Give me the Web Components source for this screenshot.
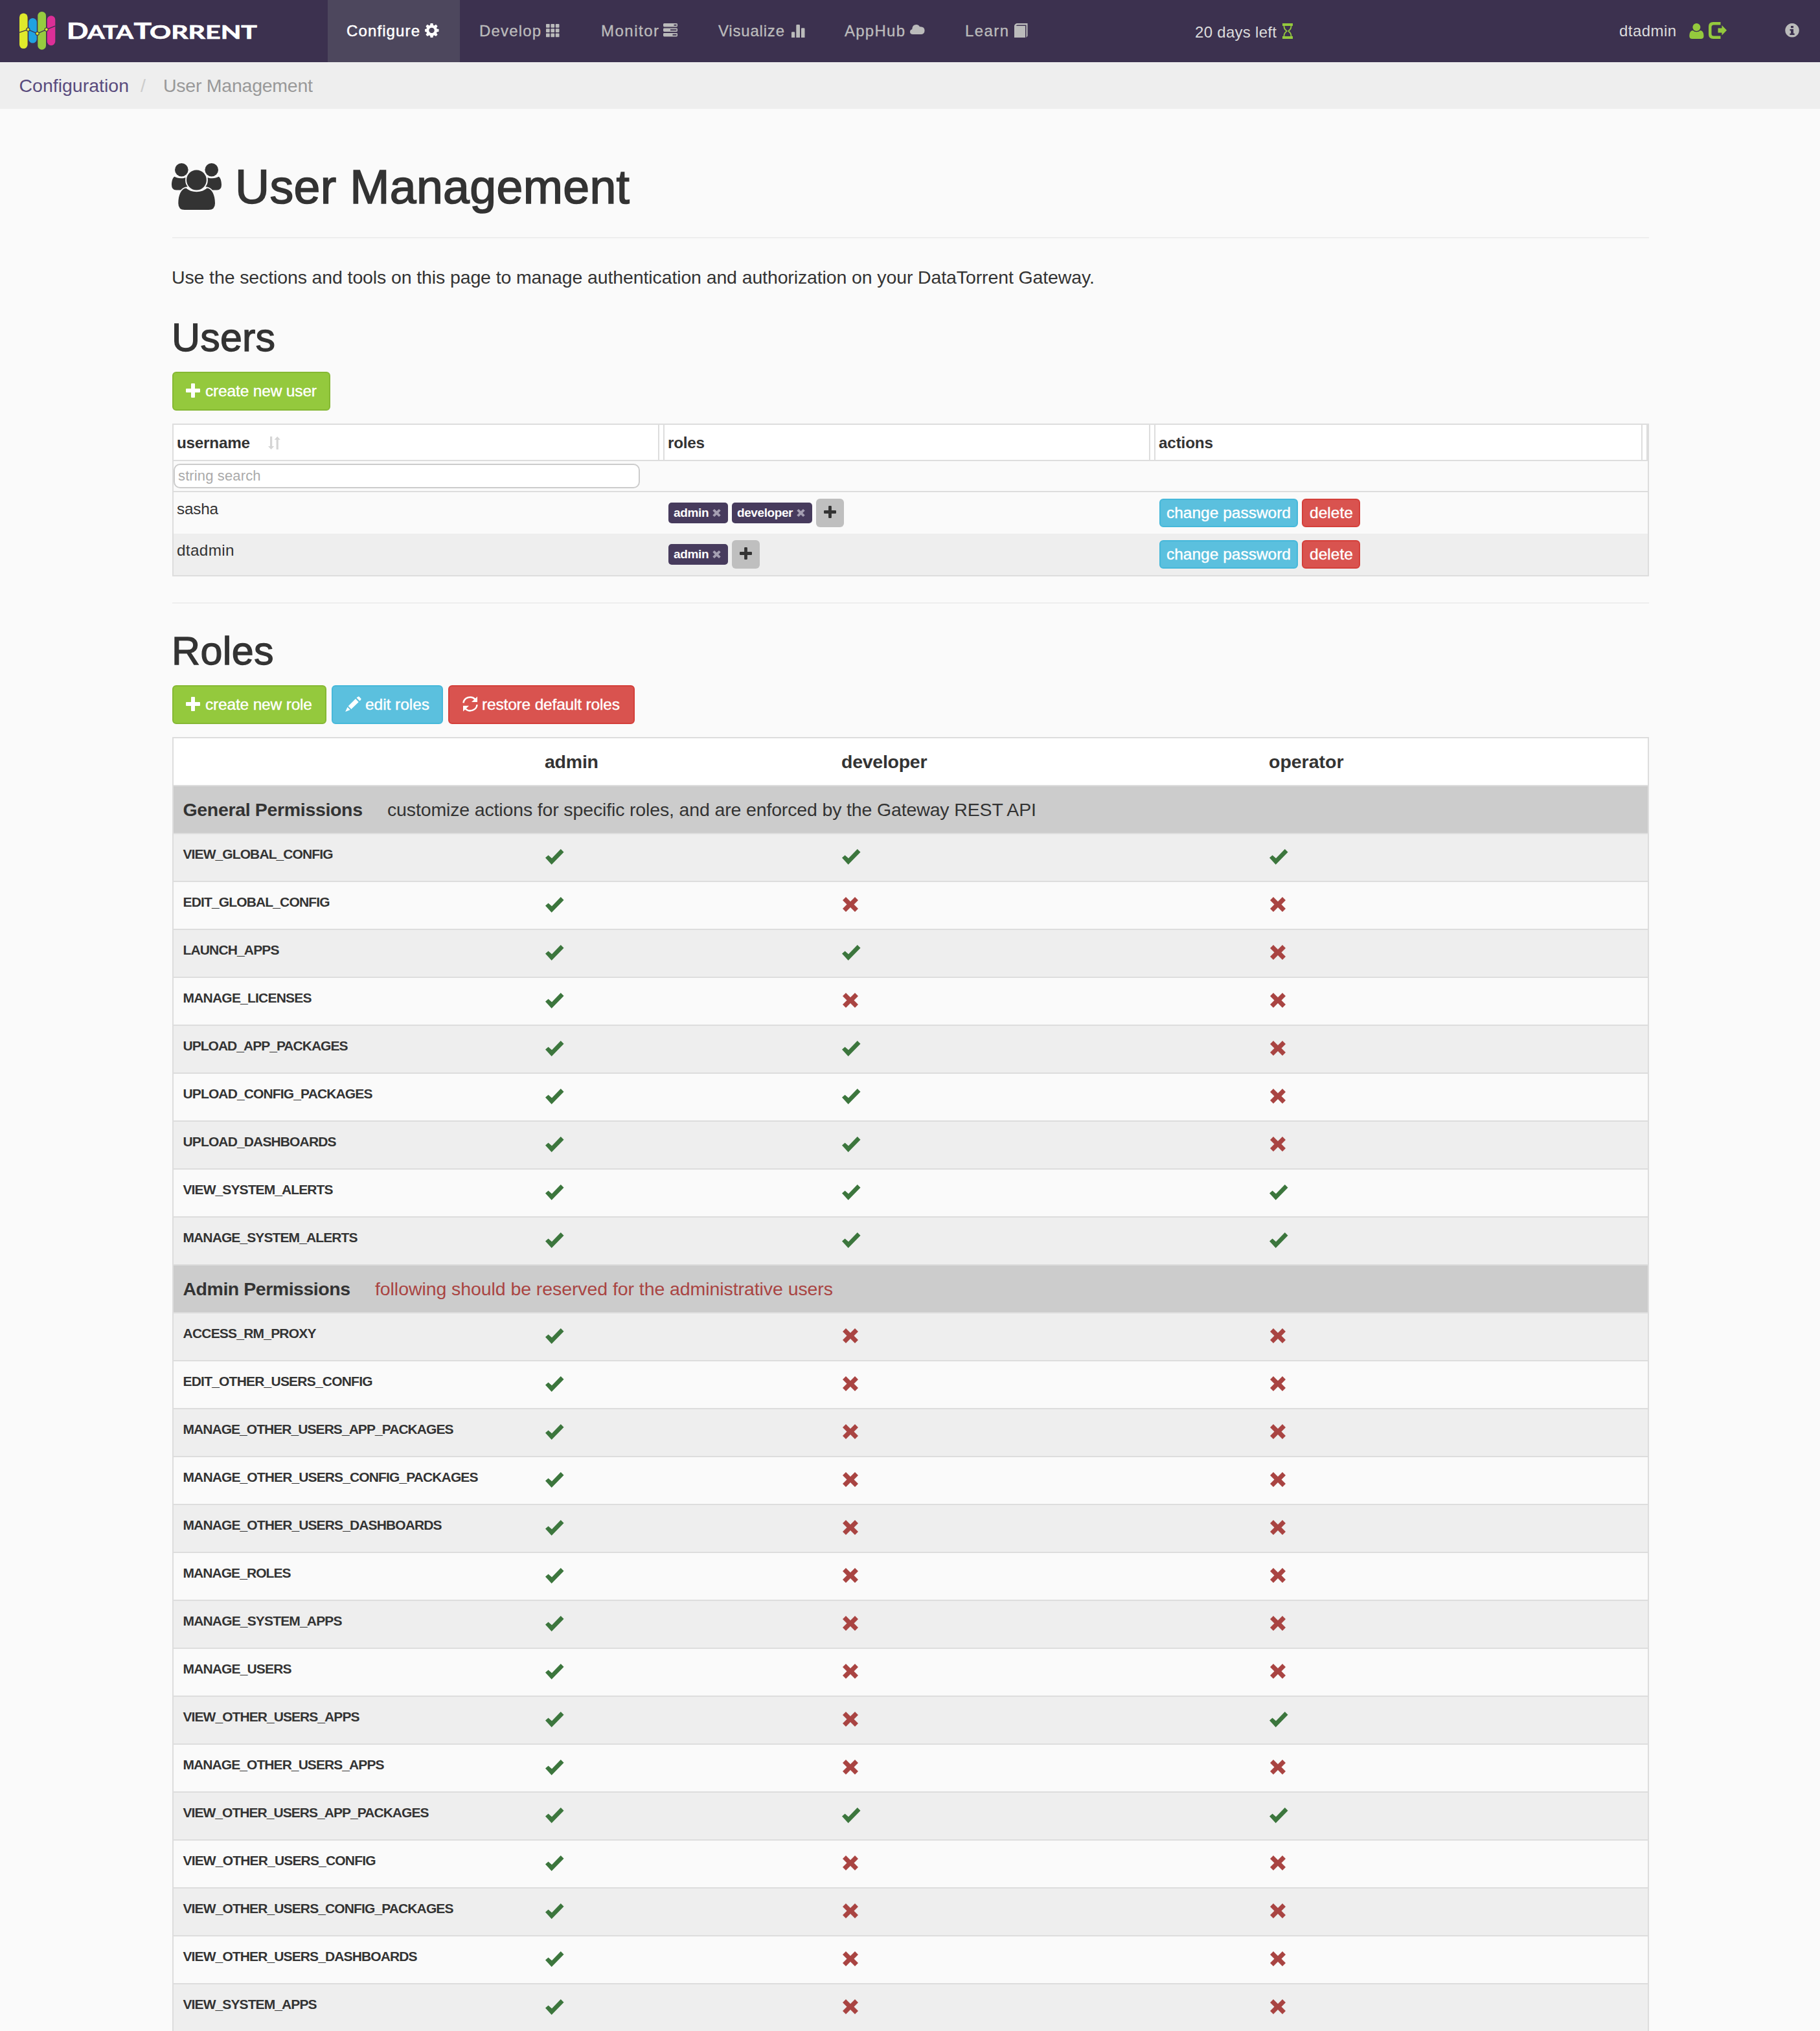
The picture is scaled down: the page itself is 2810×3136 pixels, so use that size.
<!DOCTYPE html>
<html lang="en">
<head>
<meta charset="utf-8">
<title>User Management</title>
<style>
html,body{margin:0;padding:0}
body{height:3136px;overflow:hidden;background:#fafafa;color:#333;font-family:"Liberation Sans",Arial,sans-serif;font-size:28.500px}
</style>
</head>
<body>
<dt-app></dt-app>
<script>
const el = (name, html, setup) => customElements.define(name, class extends HTMLElement {
  connectedCallback() {
    if (this.shadowRoot) return;
    const a = k => this.getAttribute(k);
    this.attachShadow({mode: 'open'}).innerHTML = typeof html === 'function' ? html(a, this) : html;
    if (setup) setup(this, a);
  }
});

/* Icons: [width, height, markup], one unit per pixel */
const ICONS = {
  users: [77, 73, '<circle cx="15.3" cy="10.3" r="10.3"/><circle cx="61.7" cy="10.3" r="10.3"/><circle cx="38.4" cy="26" r="15.4"/><path d="M4.5 20.7C7 22.4 11 23.4 15.3 23.2C18 23.2 19.8 22.7 21.4 22.2Q20 31 24.6 36.3C20 36.6 17 38 14 41.4H7Q0 41.4 0 33.5C0 28 1.5 22 4.5 20.7Z"/><path d="M4.5 20.7C7 22.4 11 23.4 15.3 23.2C18 23.2 19.8 22.7 21.4 22.2Q20 31 24.6 36.3C20 36.6 17 38 14 41.4H7Q0 41.4 0 33.5C0 28 1.5 22 4.5 20.7Z" transform="matrix(-1 0 0 1 77 0)"/><path d="M22.5 38.6C26 42 32 44.3 38.5 44.3S51 42 54.500 38.600C62 39 67 49 67 62Q67 72 57 72H20Q10.300 72 10.300 62C10.300 49 15 39 22.500 38.600Z"/>'],
  gear: [21, 22, '<path fill-rule="evenodd" d="M8.600 0h3.800l.6 3 1.500.6 2.600-1.800 2.500 2.600-1.700 2.600.6 1.600 3 .5v3.700l-3 .6-.6 1.500 1.700 2.600-2.500 2.600-2.600-1.700-1.500.6-.6 3H8.600l-.6-3-1.500-.6-2.600 1.700-2.500-2.600 1.700-2.600-.6-1.500-2.500-.6V9.100l2.500-.5.6-1.600-1.700-2.600 2.500-2.600 2.600 1.800L8 3zM10.500 6.700a4.200 4.200 0 1 0 .01 0z"/>'],
  grid: [21, 21, [0,7.300,14.600].map(y => [0,7.400,14.800].map(x => `<rect x="${x}" y="${y}" width="5.700" height="5.700" rx=".9"/>`).join('')).join('')],
  server: [22, 21, '<path fill-rule="evenodd" d="M1.500 0h19q1.500 0 1.500 1.500v2.500q0 1.400-1.500 1.400h-19q-1.500 0-1.500-1.400v-2.500q0-1.500 1.500-1.500zM16.500 1.800v1.900h4v-1.900zM1.500 7.500h19q1.500 0 1.500 1.400v2.600q0 1.400-1.500 1.400h-19q-1.500 0-1.500-1.400v-2.600q0-1.400 1.500-1.400zM11 9.300v1.900h9.500v-1.900zM1.500 14.900h19q1.500 0 1.500 1.400v2.700q0 1.400-1.500 1.400h-19q-1.500 0-1.500-1.400v-2.700q0-1.400 1.500-1.400zM14.500 16.800v1.900h6v-1.900z"/>'],
  chart: [21, 20, '<path d="M0 20v-7.500q0-1.200 1.200-1.200h2.800q1.200 0 1.200 1.200v7.500zM7.300 20v-18.600q0-1.400 1.400-1.400h2.900q1.400 0 1.400 1.400v18.600zM15 20v-13.400q0-1.300 1.300-1.300h2.900q1.300 0 1.300 1.300v13.400z"/>'],
  cloud: [23, 15, '<path d="M4.500 15Q0 14.600 0 10.900Q.2 8 3.200 7.200Q3.600 0 9.800 0Q13 0 15 3.200Q22.600 2.600 22.600 9.200Q22.300 14.500 17.600 15z"/>'],
  book: [21, 22, '<path d="M3.500 0H20.500V19.500L18.500 22V2.400H4.600L2.400 4H17V22H0V3.500Q.6 1 3.500 0z"/>'],
  hourglass: [16, 24, '<path fill-rule="evenodd" d="M0 0H16V4H14.400C14.400 8.500 12.500 10.500 10.200 12C12.500 13.500 14.400 15.500 14.400 20H16V24H0V20H1.600C1.600 15.500 3.500 13.500 5.800 12C3.500 10.500 1.600 8.500 1.600 4H0zM3.400 4C3.500 8 5.200 9.600 7.500 11.200V12.800C5.200 14.400 3.500 16 3.400 20H12.600C12.500 16 10.800 14.400 8.500 12.800V11.200C10.800 9.600 12.500 8 12.600 4z"/>'],
  user: [23, 24, '<ellipse cx="11.400" cy="6" rx="6" ry="6.100"/><path d="M5.500 11Q8 13.300 11.400 13.300T17.300 11Q22.500 11.800 22.500 19.500Q22.500 24 18 24H4.800Q.3 24 .3 19.500Q.3 11.800 5.500 11z"/>'],
  logout: [28, 26, '<path d="M18.500 0V4.500H8Q4.500 4.500 4.500 8V18Q4.500 21.500 8 21.500H18.500V26H7Q0 26 0 19V7Q0 0 7 0zM14.500 9.500H20.500V5L28 12.800L20.500 20.500V16.500H14.500z"/>'],
  info: [22, 22, '<path fill-rule="evenodd" d="M11 0a10.800 10.800 0 1 0 .01 0zM9 4h4v3.200H9zM7.500 9H13v6.400h1.600V18H7.400v-2.600H9v-3.800H7.500z"/>'],
  plus: [22, 22, '<path d="M9 0h4q1 0 1 1v7h7q1 0 1 1v4q0 1-1 1h-7v7q0 1-1 1h-4q-1 0-1-1v-7h-7q-1 0-1-1v-4q0-1 1-1h7v-7q0-1 1-1z"/>'],
  fatplus: [19, 19, '<path d="M8.300 0h2.400q1.200 0 1.200 1.200v5.900h5.900q1.200 0 1.200 1.200v2.400q0 1.200-1.200 1.200h-5.900v5.900q0 1.200-1.200 1.200h-2.400q-1.200 0-1.200-1.200v-5.900h-5.900q-1.200 0-1.200-1.200v-2.400q0-1.200 1.200-1.200h5.900v-5.900q0-1.200 1.200-1.200z"/>'],
  pencil: [25, 24, '<path d="M19 1.200L21 .2 24.700 4 23.900 6 22.300 7.300 17.500 2.600zM16 4.100L20.700 8.900 9.300 20 4.700 15.200zM3.500 16.800L7.700 21 .2 24z"/>'],
  refresh: [24, 24, '<path d="M1.500 10.300A10.500 9.800 0 0 1 19.500 4.500" fill="none" stroke="currentColor" stroke-width="2.500"/><path d="M23 .5V9H14z"/><path d="M22.500 13A10.500 9.800 0 0 1 4.500 19.300" fill="none" stroke="currentColor" stroke-width="2.500"/><path d="M1 23.500V14.800H10z"/>'],
  check: [29, 24, '<path d="M0 13.500L4.600 9.500 10 14.300 23.800 0 28.500 4.800 9.700 24z"/>'],
  cross: [24, 23, '<path d="M5 0L12 7 19 0 24 5 17.500 11.500 24 18 19 23 12 16 5 23 0 18 6.500 11.500 0 5z"/>'],
  tiny: [13, 12, '<path d="M3 0L6.500 3.300 10 0 12.700 2.600 9.200 6 12.700 9.400 10 12 6.500 8.700 3 12 .3 9.400 3.800 6 .3 2.600z"/>'],
  sort: [19, 20, '<path d="M3 0H6.200V15H9.200L4.600 20 0 15H3zM12.600 20H15.800V5H18.800L14.200 0 9.600 5H12.600z"/>'],
  logo: [56, 59, '<rect y="2.500" width="12.600" height="54.500" rx="6.300" fill="#dfe92b"/><rect x="14.200" y="10" width="12.600" height="38.600" rx="6.300" fill="#20a2e0"/><rect x="28.300" width="12.700" height="58.700" rx="6.300" fill="#96cb3f"/><rect x="42.700" y="6.200" width="12.600" height="46" rx="6.300" fill="#dc2f97"/><path d="M0 32.200L13.300 27.600 27.600 33.800 41.700 27.600 55.300 22.200" fill="none" stroke="#3c314f" stroke-width="1.300"/><g fill="#dfe92b" stroke="#3c314f" stroke-width="1.100"><circle cx="13.300" cy="27.600" r="2.600"/><circle cx="27.600" cy="33.800" r="2.600"/><circle cx="41.700" cy="27.600" r="2.600"/></g>'],
};
el('dt-icon', a => {
  const [w, h, m] = ICONS[a('name')];
  return `<style>:host{display:block;flex:none;width:${w}px;height:${h}px}svg{display:block;overflow:visible}</style><svg width="${w}" height="${h}" viewBox="0 0 ${w} ${h}" fill="currentColor" aria-hidden="true">${m}</svg>`;
});

el('dt-header', `<style>
:host{display:flex;height:96px;background:#3c314f;color:#bbb;font-size:24px;line-height:96px}
.brand{display:flex;align-items:flex-start;width:476px;padding:17.500px 0 0 30px;box-sizing:border-box}
.brand svg{display:block;margin-left:10px;overflow:visible}
nav{display:flex;margin-left:30px}
.trial,.me,.info{display:flex;align-items:flex-start;color:#ddd}
.trial{margin-left:199px;width:655px;line-height:99px}
.me{width:256px}
.trial dt-icon,.me dt-icon{color:#94c93d;margin-top:36px}
.trial dt-icon{margin-left:9px}
.info{color:#bbb}.info dt-icon{margin-top:36px}
</style>
<div class="brand"><dt-icon name="logo"></dt-icon>
<svg width="310" height="66" viewBox="96 17.500 310 66" fill="#fff" stroke="#fff" stroke-width=".7" font-family="Lato,sans-serif" font-weight="700" font-size="29.300"><text y="59.800"><tspan x="103" font-size="35" textLength="33.500" lengthAdjust="spacingAndGlyphs">D</tspan><tspan x="135" textLength="71" lengthAdjust="spacingAndGlyphs">ATA</tspan><tspan x="206.500" font-size="35" textLength="27.500" lengthAdjust="spacingAndGlyphs">T</tspan><tspan x="231" textLength="166" lengthAdjust="spacingAndGlyphs">ORRENT</tspan></text></svg></div>
<nav>
<dt-nav-item active w="204" icon="gear" tw="113" dy="36" gap="8">Configure</dt-nav-item>
<dt-nav-item w="188" icon="grid" tw="95" dy="37" gap="8">Develop</dt-nav-item>
<dt-nav-item w="181" icon="server" tw="89" dy="36" gap="7">Monitor</dt-nav-item>
<dt-nav-item w="195" icon="chart" tw="102" dy="38" gap="11">Visualize</dt-nav-item>
<dt-nav-item w="186" icon="cloud" tw="93" dy="38" gap="8">AppHub</dt-nav-item>
<dt-nav-item w="186" icon="book" tw="67" dy="36" gap="9">Learn</dt-nav-item>
</nav>
<div class="trial"><fit-text w="126">20 days left</fit-text><dt-icon name="hourglass"></dt-icon></div>
<div class="me"><fit-text w="88">dtadmin</fit-text><dt-icon name="user" style="margin-left:20px"></dt-icon><dt-icon name="logout" style="margin:34px 0 0 7px"></dt-icon></div>
<div class="info"><dt-icon name="info"></dt-icon></div>`);

el('dt-nav-item', a => `<style>
:host{display:flex;align-items:flex-start;box-sizing:border-box;width:${a('w')}px;height:96px;padding-left:30px;-webkit-text-stroke:.35px currentColor}
:host([active]){background:#4d475d;color:#fff;padding-left:29px;-webkit-text-stroke:.5px #fff}
dt-icon{margin:${a('dy')}px 0 0 ${a('gap')}px}
</style><fit-text w="${a('tw')}"><slot></slot></fit-text><dt-icon name="${a('icon')}"></dt-icon>`);

el('dt-breadcrumb', `<style>
:host{display:flex;height:72px;line-height:73px;background:#eee;padding-left:29.500px;color:#999}
.l{color:#594b7d}.s{color:#ccc;margin:0 27px 0 18px}
</style><fit-text class="l" w="169.500">Configuration</fit-text><fit-text class="s" w="8">/</fit-text><fit-text w="231">User Management</fit-text>`);

el('dt-button', a => {
  const c = {green: ['#94c93d', '#85b833'], blue: ['#5bc0de', '#46b8da'], red: ['#d9534f', '#d43f3a']}[a('kind')];
  return `<style>
:host{display:flex;box-sizing:border-box;width:${a('w')}px;height:${a('h') || 60}px;border:2px solid ${c[1]};border-radius:6px;background:${c[0]};color:#fff;font-size:24.500px;align-items:center;padding-left:${a('pad')}px;-webkit-text-stroke:.4px #fff}
dt-icon{margin:0 ${a('gap')}px 3px 0}
</style>${a('icon') ? `<dt-icon name="${a('icon')}"></dt-icon>` : ''}<fit-text w="${a('tw')}"><slot></slot></fit-text>`;
});

el('dt-tag', a => `<style>
:host{display:flex;box-sizing:border-box;width:${a('w')}px;height:32px;border-radius:5px;background:#473b5d;color:#fff;font-size:19px;font-weight:700;line-height:31px;padding-left:8px;margin-right:6px}
dt-icon{color:#a59fb2;margin:10px 0 0 5px}
</style><fit-text w="${a('tw')}"><slot></slot></fit-text><dt-icon name="tiny"></dt-icon>`);

el('dt-add', `<style>
:host{display:flex;justify-content:center;box-sizing:border-box;width:43px;height:44px;padding-top:11px;border-radius:6px;background:#bfbfbf;color:#333}
</style><dt-icon name="fatplus"></dt-icon>`);

const actions = '<dt-button kind="blue" w="214" h="44" pad="9" tw="192">change password</dt-button><dt-button kind="red" w="90" h="44" pad="10" tw="67">delete</dt-button>';
el('dt-users-table', `<style>
:host{display:block;border:2px solid #ddd;font-size:24.300px}
.r{display:grid;grid-template-columns:758px 758px 760px}
.h{background:#fff;height:54px;line-height:55px;font-weight:700;border-bottom:2px solid #ddd}
.h>div{display:flex;padding-left:5px}
.grip{margin-left:auto;width:6px;border:solid #ddd;border-width:0 2px}
.h dt-icon{color:#d5d5d5;margin:18px 0 0 28px}
.f{border-bottom:2px solid #ddd;display:flex;align-items:flex-start;padding-top:4px;box-sizing:content-box;height:42px}
.in{box-sizing:border-box;width:720px;height:38px;border:2px solid #ccc;border-radius:10px;background:#fff;color:#aaa;font-size:22px;line-height:34px;padding-left:5px}
.b{height:64px}.b.alt{background:#eee}
.n{line-height:51px;padding-left:5px}
.t,.a{display:flex;align-items:center;height:44px;padding:10px 0 0 6px}
.a{gap:6px}
</style>
<div class="r h"><div><fit-text w="113">username</fit-text><dt-icon name="sort"></dt-icon><span class="grip"></span></div><div><fit-text w="57">roles</fit-text><span class="grip"></span></div><div><fit-text w="84">actions</fit-text><span class="grip"></span></div></div>
<div class="f"><div class="in"><fit-text w="127.500">string search</fit-text></div></div>
<div class="r b"><div class="n"><fit-text w="64">sasha</fit-text></div><div class="t"><dt-tag w="92" tw="54.500">admin</dt-tag><dt-tag w="124" tw="86.500">developer</dt-tag><dt-add></dt-add></div><div class="a">${actions}</div></div>
<div class="r b alt"><div class="n"><fit-text w="88.500">dtadmin</fit-text></div><div class="t"><dt-tag w="92" tw="54.500">admin</dt-tag><dt-add></dt-add></div><div class="a">${actions}</div></div>`);

/* name, right edge of the label in CSS px, and the access of admin / developer / operator */
const GENERAL = [['VIEW_GLOBAL_CONFIG',514,'111'],['EDIT_GLOBAL_CONFIG',509,'100'],['LAUNCH_APPS',431,'110'],['MANAGE_LICENSES',481,'100'],['UPLOAD_APP_PACKAGES',537,'110'],['UPLOAD_CONFIG_PACKAGES',575,'110'],['UPLOAD_DASHBOARDS',519,'110'],['VIEW_SYSTEM_ALERTS',514,'111'],['MANAGE_SYSTEM_ALERTS',552,'111']];
const ADMIN = [['ACCESS_RM_PROXY',488,'100'],['EDIT_OTHER_USERS_CONFIG',575,'100'],['MANAGE_OTHER_USERS_APP_PACKAGES',700,'100'],['MANAGE_OTHER_USERS_CONFIG_PACKAGES',738,'100'],['MANAGE_OTHER_USERS_DASHBOARDS',682,'100'],['MANAGE_ROLES',449,'100'],['MANAGE_SYSTEM_APPS',528,'100'],['MANAGE_USERS',450,'100'],['VIEW_OTHER_USERS_APPS',555,'101'],['MANAGE_OTHER_USERS_APPS',593,'100'],['VIEW_OTHER_USERS_APP_PACKAGES',662,'111'],['VIEW_OTHER_USERS_CONFIG',580,'100'],['VIEW_OTHER_USERS_CONFIG_PACKAGES',700,'100'],['VIEW_OTHER_USERS_DASHBOARDS',644,'100'],['VIEW_SYSTEM_APPS',489,'100']];
el('dt-permission-row', a => `<style>
:host{display:grid;grid-template-columns:558px 458px 660px 600px;height:72px;border-bottom:2px solid #ddd;background:${a('alt') ? '#fafafa' : '#eee'}}
.n{font-size:21px;font-weight:700;line-height:61px;padding-left:14.500px}
.c{padding:23px 0 0 16px;color:#3c763d}.x{color:#a94442;padding-left:17px}
</style><div class="n"><fit-text w="${a('tw')}"><slot></slot></fit-text></div>` + [...a('access')].map(v => v === '1' ? '<div class="c"><dt-icon name="check"></dt-icon></div>' : '<div class="c x"><dt-icon name="cross"></dt-icon></div>').join(''));

const rows = list => list.map(([n, e, s], i) => `<dt-permission-row access="${s}" tw="${e - 282}"${i % 2 ? ' alt="1"' : ''}>${n}</dt-permission-row>`).join('');
el('dt-roles-table', `<style>
:host{display:block;border:2px solid #ddd}
.h{display:grid;grid-template-columns:558px 458px 660px 600px;height:72px;line-height:73px;background:#fff;font-weight:700;border-bottom:2px solid #ddd}
.h>*{margin-left:15px}
.g{display:flex;height:72px;line-height:73px;background:#ccc;border-bottom:2px solid #ddd;padding-left:14.500px}
.g b{margin-right:38px}.warn{color:#a94442}
</style>
<div class="h"><span></span><fit-text w="83">admin</fit-text><fit-text w="132.500">developer</fit-text><fit-text w="115.500">operator</fit-text></div>
<div class="g"><b><fit-text w="277.500">General Permissions</fit-text></b><fit-text w="1002">customize actions for specific roles, and are enforced by the Gateway REST API</fit-text></div>
${rows(GENERAL)}
<div class="g"><b><fit-text w="258.500">Admin Permissions</fit-text></b><fit-text class="warn" w="707">following should be reserved for the administrative users</fit-text></div>
${rows(ADMIN)}`);

el('dt-app', `<style>
:host{display:block}
main{display:block;width:2280px;margin-left:266px}
h1{display:flex;margin:81px 0 37px;height:80px;line-height:80px;font-size:73.500px;font-weight:400;-webkit-text-stroke:1.600px #333}
h1 dt-icon{margin:3px 21px 0 -1px;-webkit-text-stroke:0}
h2{margin:40px 0 20px -1px;height:66px;line-height:67px;font-size:61px;font-weight:400;-webkit-text-stroke:1.300px #333}
p{margin:40px 0 0 -1px;height:40px;line-height:41px}
hr{border:0;height:2px;background:#eee;margin:0}
.bar{display:flex;gap:8px;margin-bottom:20px}
dt-users-table{margin-bottom:40px}
</style>
<dt-header></dt-header><dt-breadcrumb></dt-breadcrumb>
<main>
<h1><dt-icon name="users"></dt-icon><fit-text w="609">User Management</fit-text></h1>
<hr>
<p><fit-text w="1425">Use the sections and tools on this page to manage authentication and authorization on your DataTorrent Gateway.</fit-text></p>
<h2><fit-text w="160">Users</fit-text></h2>
<div class="bar"><dt-button kind="green" w="244" icon="plus" pad="19" gap="8" tw="172">create new user</dt-button></div>
<dt-users-table></dt-users-table>
<hr>
<h2><fit-text w="157.500">Roles</fit-text></h2>
<div class="bar"><dt-button kind="green" w="238" icon="plus" pad="19" gap="8" tw="165">create new role</dt-button><dt-button kind="blue" w="172" icon="pencil" pad="19" gap="6" tw="99">edit roles</dt-button><dt-button kind="red" w="288" icon="refresh" pad="20" gap="6" tw="213">restore default roles</dt-button></div>
<dt-roles-table></dt-roles-table>
</main>`);

/* Single-line text tracked so that it fills the given advance width */
el('fit-text', '<style>:host{display:block;flex:none;white-space:nowrap}span{display:inline-block}</style><span><slot></slot></span>', (host, a) => {
  const w = +a('w'), span = host.shadowRoot.querySelector('span');
  host.style.width = w + 'px';
  const n = host.querySelector('slot') ? host.getRootNode().host.textContent.length : host.textContent.length;
  if (n > 1) host.style.letterSpacing = ((w - span.getBoundingClientRect().width) / (n - 1)).toFixed(3) + 'px';
});
</script>
</body>
</html>
